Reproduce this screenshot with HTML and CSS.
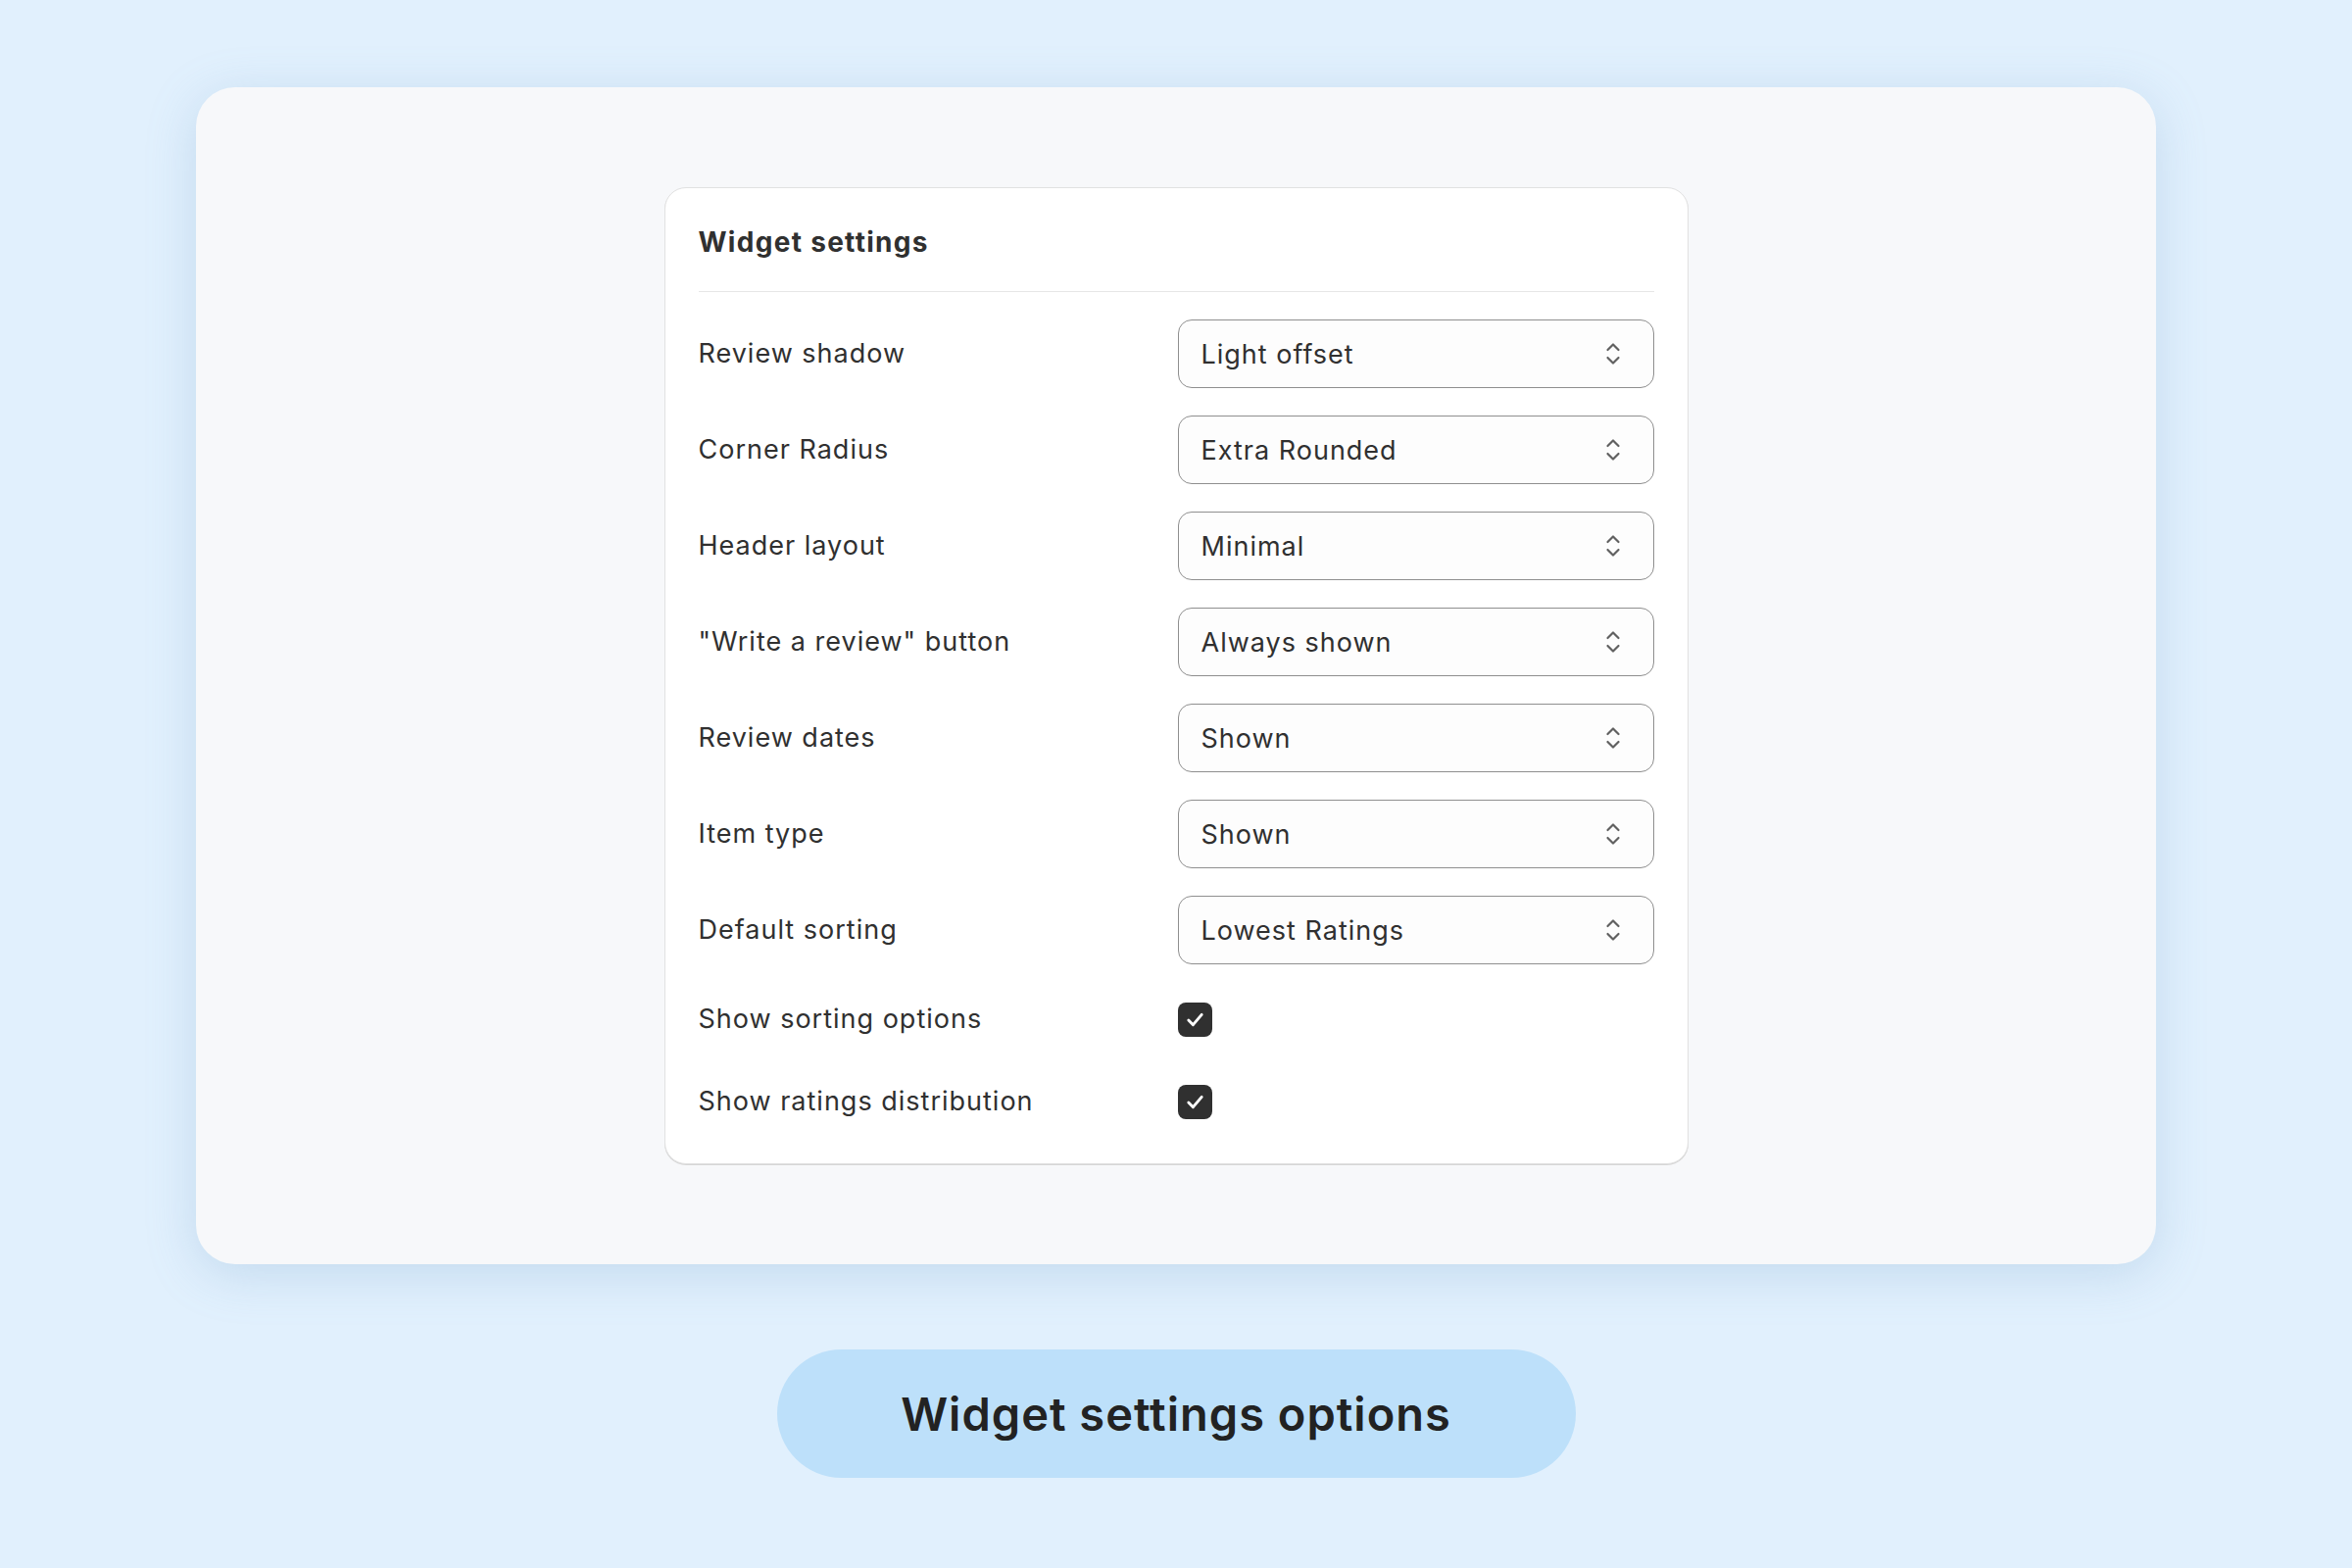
FILE: index.html
```html
<!DOCTYPE html>
<html lang="en">
<head>
<meta charset="utf-8">
<title>Widget settings options</title>
<link rel="stylesheet" href="styles.css">
</head>
<body>
<main class="page">
  <section class="card">
    <div class="panel">
      <h2 class="panel-title">Widget settings</h2>
      <div class="rows">
        <div class="row">
          <span class="label">Review shadow</span>
          <div class="select"><span class="value">Light offset</span><svg class="chev" viewBox="0 0 16 26"><path d="M2.5 9 L8 3.5 L13.5 9 M2.5 17 L8 22.5 L13.5 17"/></svg></div>
        </div>
        <div class="row">
          <span class="label">Corner Radius</span>
          <div class="select"><span class="value">Extra Rounded</span><svg class="chev" viewBox="0 0 16 26"><path d="M2.5 9 L8 3.5 L13.5 9 M2.5 17 L8 22.5 L13.5 17"/></svg></div>
        </div>
        <div class="row">
          <span class="label">Header layout</span>
          <div class="select"><span class="value">Minimal</span><svg class="chev" viewBox="0 0 16 26"><path d="M2.5 9 L8 3.5 L13.5 9 M2.5 17 L8 22.5 L13.5 17"/></svg></div>
        </div>
        <div class="row">
          <span class="label">"Write a review" button</span>
          <div class="select"><span class="value">Always shown</span><svg class="chev" viewBox="0 0 16 26"><path d="M2.5 9 L8 3.5 L13.5 9 M2.5 17 L8 22.5 L13.5 17"/></svg></div>
        </div>
        <div class="row">
          <span class="label">Review dates</span>
          <div class="select"><span class="value">Shown</span><svg class="chev" viewBox="0 0 16 26"><path d="M2.5 9 L8 3.5 L13.5 9 M2.5 17 L8 22.5 L13.5 17"/></svg></div>
        </div>
        <div class="row">
          <span class="label">Item type</span>
          <div class="select"><span class="value">Shown</span><svg class="chev" viewBox="0 0 16 26"><path d="M2.5 9 L8 3.5 L13.5 9 M2.5 17 L8 22.5 L13.5 17"/></svg></div>
        </div>
        <div class="row">
          <span class="label">Default sorting</span>
          <div class="select"><span class="value">Lowest Ratings</span><svg class="chev" viewBox="0 0 16 26"><path d="M2.5 9 L8 3.5 L13.5 9 M2.5 17 L8 22.5 L13.5 17"/></svg></div>
        </div>
        <div class="row row-check">
          <span class="label">Show sorting options</span>
          <span class="checkbox"><svg viewBox="0 0 34 34"><path d="M10.5 17.5 L15 22 L23.5 12"/></svg></span>
        </div>
        <div class="row row-check">
          <span class="label">Show ratings distribution</span>
          <span class="checkbox"><svg viewBox="0 0 34 34"><path d="M10.5 17.5 L15 22 L23.5 12"/></svg></span>
        </div>
      </div>
    </div>
  </section>
  <div class="caption">Widget settings options</div>
</main>
</body>
</html>
```

FILE: styles.css
```css
* { box-sizing: border-box; }

html, body {
  margin: 0;
  padding: 0;
}

body {
  background: #e1f0fd;
  font-family: Inter, "Liberation Sans", sans-serif;
  color: #303030;
}

.page {
  width: 2400px;
  height: 1600px;
  display: flex;
  flex-direction: column;
  align-items: center;
  padding-top: 89px;
}

.card {
  width: 2000px;
  height: 1201px;
  background: #f7f8fa;
  border-radius: 40px;
  box-shadow: 0 10px 50px rgba(120, 160, 200, 0.28);
  display: flex;
  align-items: center;
  justify-content: center;
}

.panel {
  width: 1045px;
  background: #ffffff;
  border: 1px solid #e1e1e1;
  border-radius: 22px;
  box-shadow: 0 1px 0 #d6d6d6;
  padding: 35px 34px 35px 34px;
}

.panel-title {
  margin: 0;
  font-size: 28px;
  line-height: 40px;
  font-weight: 650;
  letter-spacing: 1.3px;
  color: #303030;
  padding-bottom: 30px;
  border-bottom: 1px solid #e6e6e6;
}

.rows {
  margin-top: 28px;
  display: flex;
  flex-direction: column;
  gap: 28px;
}

.row {
  display: grid;
  grid-template-columns: 489px 486px;
  align-items: center;
  height: 70px;
}

.row-check {
  height: 56px;
}

.label {
  font-size: 27px;
  line-height: 36px;
  letter-spacing: 1px;
  color: #303030;
}

.select {
  height: 70px;
  border: 1.5px solid #8f8f8f;
  border-radius: 14px;
  background: #fdfdfd;
  display: flex;
  align-items: center;
  justify-content: space-between;
  padding: 0 33px 0 23px;
}

.value {
  font-size: 27px;
  letter-spacing: 1px;
  color: #303030;
}

.chev {
  width: 16px;
  height: 26px;
  fill: none;
  stroke: #616161;
  stroke-width: 2.2;
  stroke-linecap: round;
  stroke-linejoin: round;
}

.checkbox {
  width: 35px;
  height: 35px;
  border-radius: 8px;
  background: #303030;
  display: flex;
}

.checkbox svg {
  width: 35px;
  height: 35px;
  fill: none;
  stroke: #ffffff;
  stroke-width: 2.8;
  stroke-linecap: round;
  stroke-linejoin: round;
}

.caption {
  margin-top: 87px;
  width: 815px;
  height: 131px;
  border-radius: 66px;
  background: #bde0fa;
  display: flex;
  align-items: center;
  justify-content: center;
  font-size: 47px;
  font-weight: 600;
  letter-spacing: 1px;
  color: #222222;
}
```
